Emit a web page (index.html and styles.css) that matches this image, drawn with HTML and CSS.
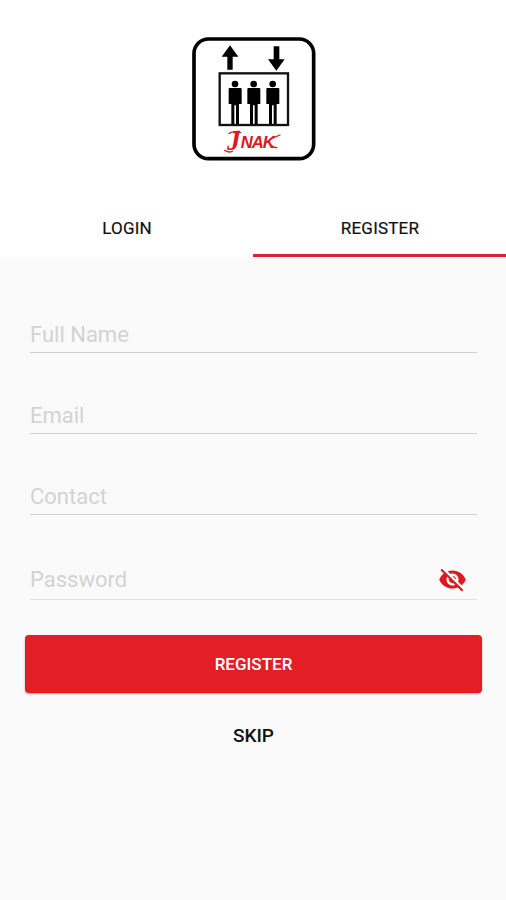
FILE: index.html
```html
<!DOCTYPE html>
<html lang="en">
<head>
<meta charset="utf-8">
<title>Register</title>
<link rel="stylesheet" href="styles.css">
</head>
<body>
<header class="header">
  <svg class="logo" viewBox="27 21 372 372" role="img" aria-label="JNAK">
    <rect class="frame" x="33" y="27" width="359" height="359" rx="43"/>
    <path d="M141 46L166 80H149V119H133V80H116Z"/>
    <path d="M272 49H289V88H305L280 122L255 88H272Z"/>
    <rect class="cabin" x="110" y="130" width="205" height="155"/>
    <defs>
      <g id="person">
        <circle cx="0" cy="162" r="10"/>
        <path d="M-16 174H17Q20 174 20 178V222H12V282H3V226H-2V282H-11V222H-19V178Q-19 174 -16 174Z"/>
      </g>
    </defs>
    <use href="#person" x="156"/>
    <use href="#person" x="212"/>
    <use href="#person" x="269"/>
    <g class="brand">
      <text x="132" y="359"><tspan class="brand-initial">J</tspan><tspan class="brand-rest" y="355">NAK</tspan></text>
      <path class="swash" d="M138 311Q144 303 170 304M125 361Q134 369 148 364M270 324L291 315M266 347Q272 353 282 353"/>
    </g>
  </svg>
</header>
<nav class="tabs">
  <a class="tab">LOGIN</a>
  <a class="tab active">REGISTER</a>
</nav>
<main class="form">
  <div class="field"><span>Full Name</span></div>
  <div class="field"><span>Email</span></div>
  <div class="field"><span>Contact</span></div>
  <div class="field password"><span>Password</span>
    <svg class="eye" viewBox="0 0 24 24"><path d="M12 7c2.76 0 5 2.24 5 5 0 .65-.13 1.26-.36 1.83l2.92 2.92c1.51-1.26 2.7-2.89 3.43-4.75-1.73-4.39-6-7.5-11-7.5-1.4 0-2.74.25-3.98.7l2.16 2.16C10.74 7.13 11.35 7 12 7zM2 4.27l2.28 2.28.46.46C3.08 8.3 1.78 10.02 1 12c1.73 4.39 6 7.5 11 7.5 1.55 0 3.03-.3 4.38-.84l.42.42L19.73 22 21 20.73 3.27 3 2 4.27zM7.53 9.8l1.55 1.55c-.05.21-.08.43-.08.65 0 1.66 1.34 3 3 3 .22 0 .44-.03.65-.08l1.55 1.55c-.67.33-1.41.53-2.2.53-2.76 0-5-2.24-5-5 0-.79.2-1.53.53-2.2zm4.31-.78l3.15 3.15.02-.16c0-1.66-1.34-3-3-3l-.17.01z"/></svg>
  </div>
  <button class="submit">REGISTER</button>
  <a class="skip">SKIP</a>
</main>
</body>
</html>
```
FILE: styles.css
```css
* { box-sizing: border-box; }
body {
  margin: 0;
  min-height: 900px;
  display: flex;
  flex-direction: column;
  background: #fafafa;
  color: #111;
  font-family: Roboto, "Liberation Sans", sans-serif;
}
.header {
  height: 199px;
  padding-top: 37px;
  background: #fff;
  text-align: center;
}
.logo { width: 124px; height: 124px; margin-left: 1px; }
.frame { fill: #fff; stroke: #000; stroke-width: 11; }
.cabin { fill: #fff; stroke: #111; stroke-width: 7; }
.brand { fill: #dc1820; font-style: italic; }
.brand-initial { font: italic bold 82px "Liberation Serif", serif; }
.brand-rest { font: italic bold 50px "Liberation Sans", sans-serif; letter-spacing: -3px; }
.swash { fill: none; stroke: #dc1820; stroke-width: 4; stroke-linecap: round; }
.tabs {
  display: grid;
  grid-template-columns: 1fr 1fr;
  height: 58px;
  background: #fff;
}
.tab {
  display: flex;
  align-items: center;
  justify-content: center;
  padding: 3px 0 0 1px;
  border-bottom: 3px solid transparent;
  font-size: 17px;
  font-weight: 400;
  letter-spacing: .2px;
  -webkit-text-stroke: .2px #111;
}
.tab.active { border-color: #d92532; }
.form {
  flex: 1;
  display: flex;
  flex-direction: column;
  padding: 15px 24px 0 25px;
}
.field {
  display: flex;
  align-items: flex-end;
  height: 81px;
  margin: 0 5px;
  padding-bottom: 4px;
  border-bottom: 1px solid #d0d0d0;
  color: #d3d3d3;
  font-size: 22px;
  line-height: 26px;
}
.password {
  height: 85px;
  padding-bottom: 6px;
  justify-content: space-between;
  border-color: #e2e2e2;
}
.eye { width: 29px; height: 29px; margin: 0 10px -1px 0; fill: #df1820; }
.submit {
  height: 58px;
  margin-top: 35px;
  border: 0;
  border-radius: 4px;
  background: #e31e25;
  box-shadow: 0 1px 2px rgba(0, 0, 0, .35);
  color: #fff;
  font: 500 17px Roboto, sans-serif;
}
.skip {
  margin-top: 31px;
  text-align: center;
  font-size: 19px;
  font-weight: 500;
  line-height: 24px;
}
```
